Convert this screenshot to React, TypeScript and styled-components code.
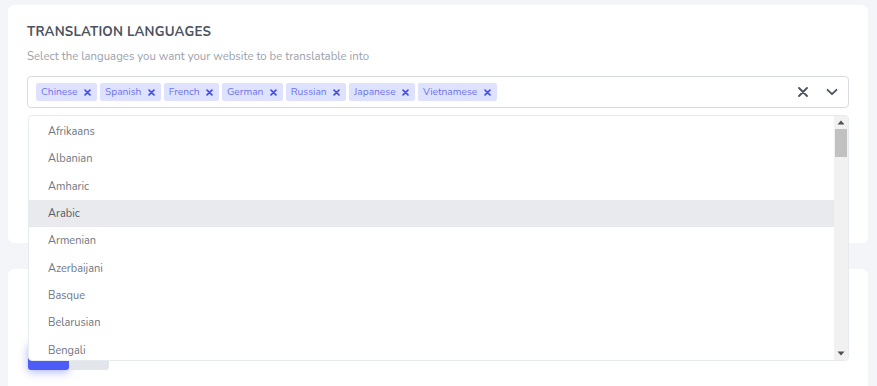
import styled, { createGlobalStyle } from "styled-components"

const GlobalStyle = createGlobalStyle`
  html, body {
    margin: 0;
    padding: 0;
    background: #f4f5f9;
    font-family: Nunito, Lato, "Open Sans", sans-serif;
  }
`

const Page = styled.div`
  padding: 5px 9px 0 8px;
  display: flex;
  flex-direction: column;
  gap: 26px;
  height: 386px;
  box-sizing: border-box;
  overflow: hidden;
`

const Card = styled.section<{ $height: number }>`
  background: #fff;
  border-radius: 6px;
  padding: 20px 19px;
  height: ${p => p.$height}px;
  box-sizing: border-box;
  flex-shrink: 0;
`

const Title = styled.h3`
  margin: 0;
  font-size: 13.3px;
  font-weight: 700;
  letter-spacing: 0.2px;
  color: #4b5360;
  text-transform: uppercase;
  line-height: 15px;
`

const Subtitle = styled.p`
  margin: 8px 0 12px;
  font-size: 11.4px;
  color: #9aa1ab;
  line-height: 16px;
`

const SelectWrap = styled.div`
  position: relative;
`

const Control = styled.div`
  height: 32px;
  box-sizing: border-box;
  border: 1px solid #d7dbe0;
  border-radius: 4px;
  display: flex;
  align-items: center;
  padding: 0 2px 0 8px;
  background: #fff;
`

const Chips = styled.div`
  flex: 1;
  display: flex;
  gap: 3px;
`

const Chip = styled.span`
  display: inline-flex;
  align-items: center;
  height: 18px;
  padding: 0 0 0 5px;
  background: #dfe2fe;
  border-radius: 2px;
  color: #6b74ee;
  font-size: 10.2px;
`

const ChipRemove = styled.span`
  display: inline-flex;
  align-items: center;
  justify-content: center;
  width: 18.4px;
  height: 18px;
  margin-left: 1px;
  color: #4450e6;
`

const Indicator = styled.span`
  display: inline-flex;
  align-items: center;
  justify-content: center;
  width: 29px;
  height: 30px;
  color: #4b5360;
`

const Menu = styled.div`
  position: absolute;
  top: calc(100% + 7px);
  left: 1px;
  right: 0;
  height: 246px;
  box-sizing: border-box;
  background: #fff;
  border: 1px solid #e6ebef;
  border-radius: 4px;
  overflow: hidden;
  display: flex;
  z-index: 10;
`

const OptionList = styled.div`
  flex: 1;
  padding: 2px 0;
  overflow: hidden;
`

const Option = styled.div<{ $active?: boolean }>`
  height: 27.3px;
  display: flex;
  align-items: center;
  padding: 0 19px;
  font-size: 11px;
  color: ${p => (p.$active ? "#555c67" : "#70767f")};
  background: ${p => (p.$active ? "#e8eaed" : "transparent")};
`

const ScrollTrack = styled.div`
  width: 14px;
  background: #f1f1f1;
  display: flex;
  flex-direction: column;
`

const ScrollArrow = styled.div`
  height: 13px;
  display: flex;
  align-items: center;
  justify-content: center;
  color: #505050;
`

const ScrollBody = styled.div`
  flex: 1;
  padding: 0 1px;
`

const ScrollThumb = styled.div`
  height: 28px;
  background: #c1c1c1;
`

const ButtonRow = styled.div`
  display: flex;
  margin-top: 54px;
  padding-left: 1px;
`

const Button = styled.button<{ $primary?: boolean }>`
  width: ${p => (p.$primary ? 41 : 40)}px;
  height: 27px;
  border: 0;
  border-radius: 3px;
  background: ${p => (p.$primary ? "#4d5cf6" : "#e2e6ea")};
  box-shadow: ${p => (p.$primary ? "0 2px 8px rgba(77, 92, 246, 0.45)" : "none")};
`

const selected = ["Chinese", "Spanish", "French", "German", "Russian", "Japanese", "Vietnamese"]

const languages = [
  "Afrikaans", "Albanian", "Amharic", "Arabic", "Armenian", "Azerbaijani", "Basque",
  "Belarusian", "Bengali", "Bosnian", "Bulgarian", "Catalan",
]

const SmallX = () => (
  <svg width="7" height="7" viewBox="0 0 10 10" fill="none" stroke="currentColor" strokeWidth="2.4" strokeLinecap="round">
    <path d="M1.5 1.5l7 7M8.5 1.5l-7 7" />
  </svg>
)

const ClearIcon = () => (
  <svg width="10" height="10" viewBox="0 0 10 10" fill="none" stroke="currentColor" strokeWidth="1.8" strokeLinecap="round">
    <path d="M1 1l8 8M9 1l-8 8" />
  </svg>
)

const Chevron = () => (
  <svg width="12" height="8" viewBox="0 0 12 8" fill="none" stroke="currentColor" strokeWidth="1.8" strokeLinecap="round" strokeLinejoin="round">
    <path d="M1.5 1.8L6 6.2l4.5-4.4" />
  </svg>
)

const Triangle = ({ up }: { up?: boolean }) => (
  <svg width="8" height="5" viewBox="0 0 8 5" fill="currentColor">
    <path d={up ? "M4 0.5L7.5 4.5H0.5Z" : "M0.5 0.5H7.5L4 4.5Z"} />
  </svg>
)

export default function App() {
  return (
    <>
      <GlobalStyle />
      <Page>
        <Card $height={238}>
          <Title>Translation Languages</Title>
          <Subtitle>Select the languages you want your website to be translatable into</Subtitle>
          <SelectWrap>
            <Control>
              <Chips>
                {selected.map(lang => (
                  <Chip key={lang}>
                    {lang}
                    <ChipRemove><SmallX /></ChipRemove>
                  </Chip>
                ))}
              </Chips>
              <Indicator><ClearIcon /></Indicator>
              <Indicator><Chevron /></Indicator>
            </Control>
            <Menu>
              <OptionList>
                {languages.map(lang => (
                  <Option key={lang} $active={lang === "Arabic"}>{lang}</Option>
                ))}
              </OptionList>
              <ScrollTrack>
                <ScrollArrow><Triangle up /></ScrollArrow>
                <ScrollBody><ScrollThumb /></ScrollBody>
                <ScrollArrow><Triangle /></ScrollArrow>
              </ScrollTrack>
            </Menu>
          </SelectWrap>
        </Card>
        <Card $height={160}>
          <ButtonRow>
            <Button $primary />
            <Button />
          </ButtonRow>
        </Card>
      </Page>
    </>
  )
}
